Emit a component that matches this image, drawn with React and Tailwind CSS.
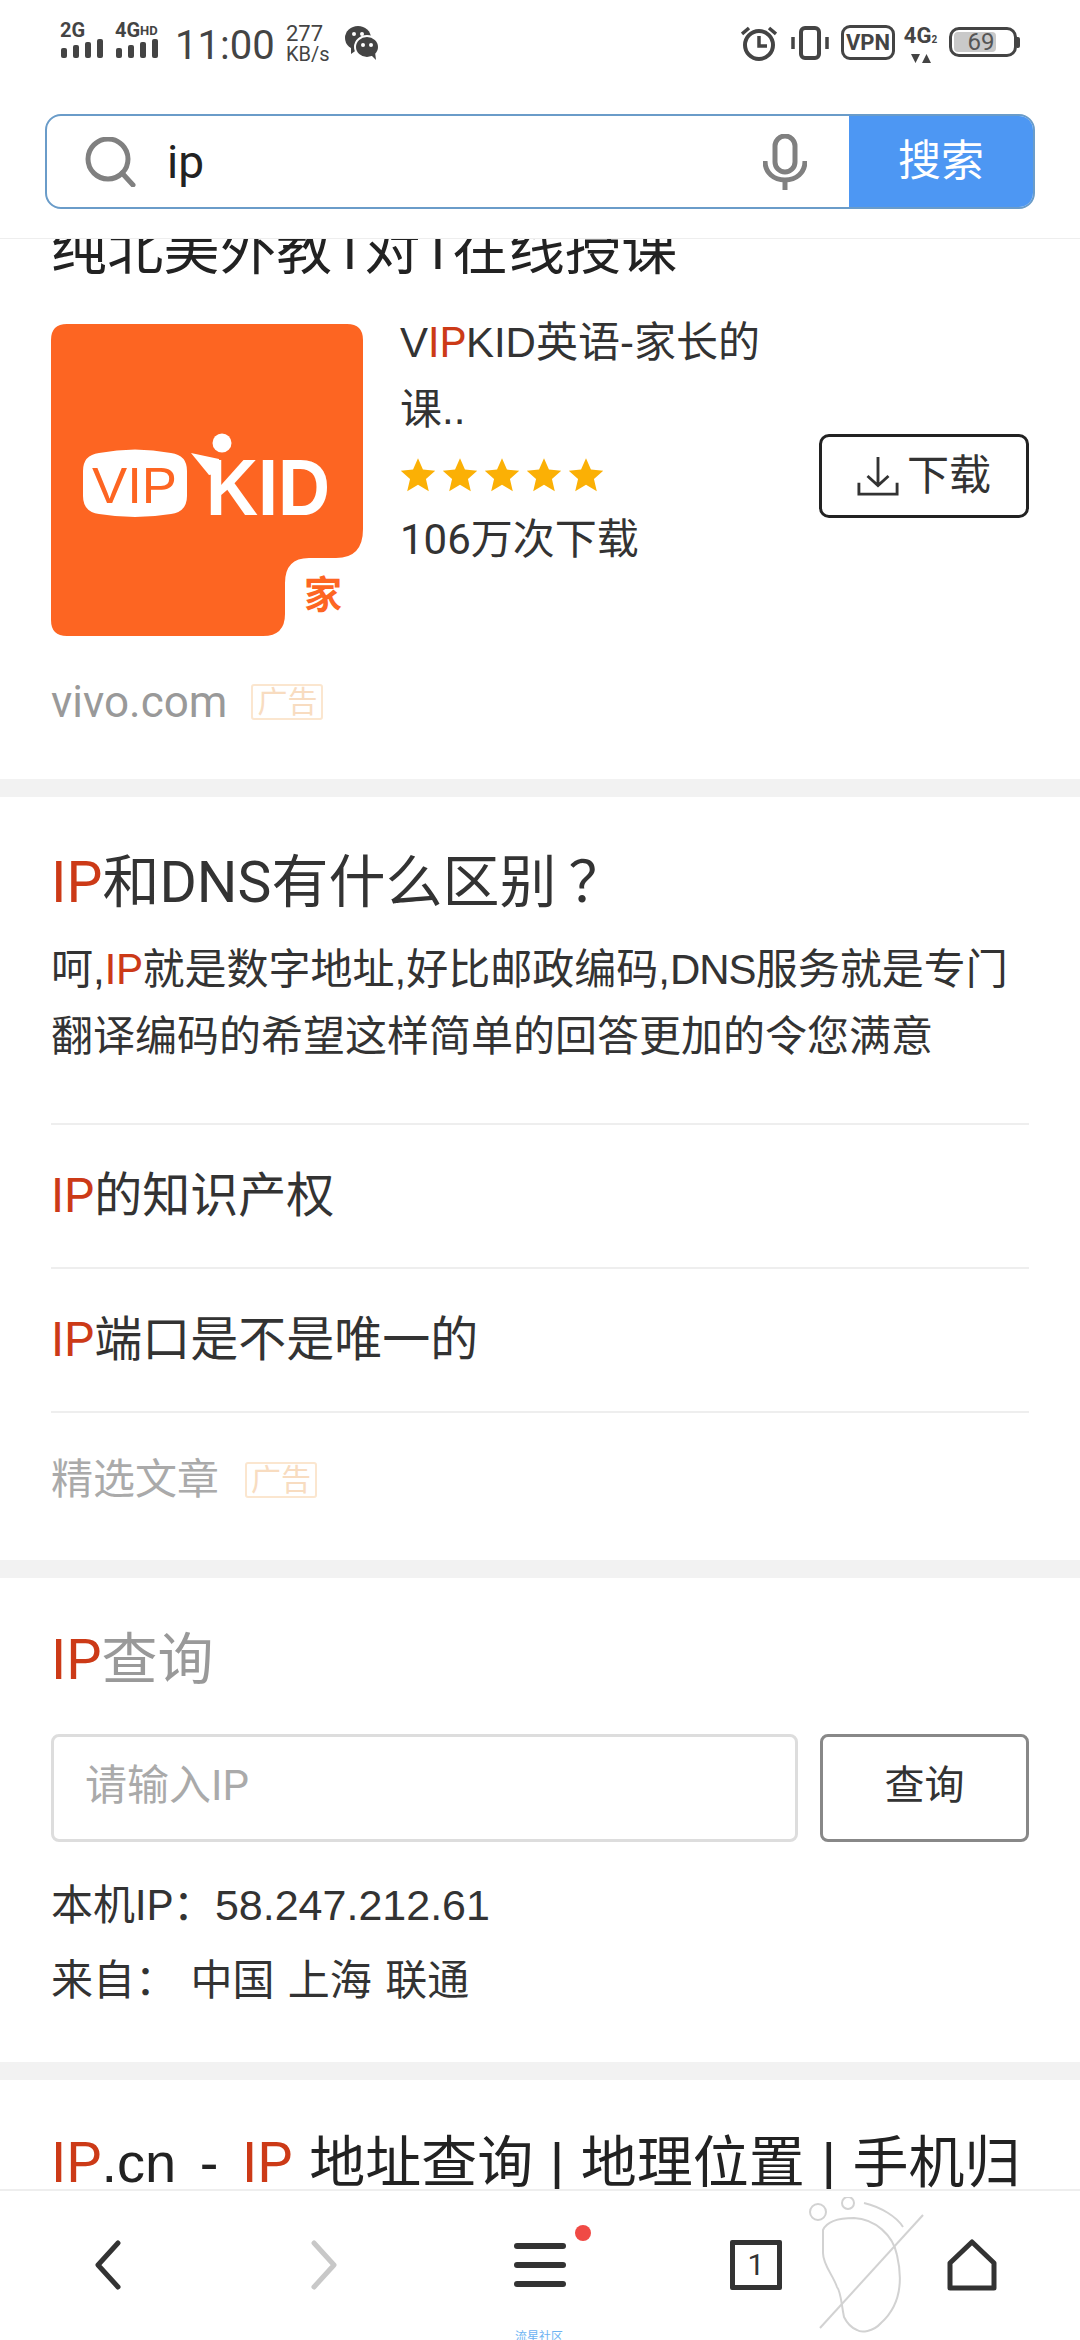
import React from 'react';

const Ip = ({ children = 'IP' }) => <span className="text-[#cc3a17] font-['Roboto',sans-serif]">{children}</span>;

const Signal = () => (
  <div className="flex items-end gap-[6px] h-[19px]">
    <div className="w-[6px] h-[10px] rounded-[2px] bg-[#444]" />
    <div className="w-[6px] h-[13px] rounded-[2px] bg-[#444]" />
    <div className="w-[6px] h-[16px] rounded-[2px] bg-[#444]" />
    <div className="w-[6px] h-[19px] rounded-[2px] bg-[#444]" />
  </div>
);

const AdTag = () => (
  <span className="flex items-center justify-center w-[72px] h-[36px] border-2 border-[#fbe6cf] rounded-[3px] text-[30px] leading-none text-[#f8dcc0]">
    广告
  </span>
);

const Band = () => <div className="h-[18px] shrink-0 bg-[#f2f2f2]" />;

const Star = () => (
  <svg width="36" height="36" viewBox="0 0 24 24" fill="#fbb005">
    <path d="M12 0.8l3.3 7.6 8.2.8-6.2 5.4 1.9 8.2L12 18.5l-7.2 4.3 1.9-8.2L.5 9.2l8.2-.8z" />
  </svg>
);

const StatusBar = () => (
  <div className="h-[114px] flex items-start justify-between pl-[60px] pr-[60px] pt-[23px] text-[#444]">
    <div className="flex items-start">
      <div className="w-[55px] flex flex-col">
        <span className="text-[20px] leading-[15px] font-bold">2G</span>
        <div className="mt-[1px] ml-[1px]"><Signal /></div>
      </div>
      <div className="w-[60px] flex flex-col">
        <span className="text-[20px] leading-[15px] font-bold whitespace-nowrap">4G<span className="text-[13px] align-top">HD</span></span>
        <div className="mt-[1px] ml-[1px]"><Signal /></div>
      </div>
      <span className="text-[40px] leading-[39px] mt-[3px] w-[111px]">11:00</span>
      <div className="w-[59px] flex flex-col leading-[20px] mt-[1px]">
        <span className="text-[22px]">277</span>
        <span className="text-[20px]">KB/s</span>
      </div>
      <svg className="mt-[2px]" width="34" height="36" viewBox="0 0 34 36">
        <ellipse cx="13" cy="13" rx="13" ry="12" fill="#444" />
        <path d="M6 21l0 8 7-5z" fill="#444" />
        <ellipse cx="22" cy="22" rx="12" ry="11" fill="#444" stroke="#fff" strokeWidth="2" />
        <path d="M26 30l5 5-1-8z" fill="#444" />
        <circle cx="9" cy="9" r="2" fill="#fff" />
        <circle cx="17" cy="9" r="2" fill="#fff" />
        <circle cx="18" cy="20" r="2" fill="#fff" />
        <circle cx="26" cy="20" r="2" fill="#fff" />
      </svg>
    </div>
    <div className="flex items-start">
      <svg className="mt-[2px]" width="36" height="36" viewBox="0 0 36 36" fill="none" stroke="#444" strokeWidth="4">
        <circle cx="18" cy="20" r="14" />
        <path d="M18 11v10h8" strokeWidth="3.5" />
        <path d="M1 9l7-6M35 9l-7-6" strokeWidth="3.5" />
      </svg>
      <svg className="ml-[13px] mt-[3px]" width="40" height="34" viewBox="0 0 40 34" fill="none" stroke="#444">
        <rect x="11" y="2" width="18" height="30" rx="4" strokeWidth="4" />
        <path d="M3 11v12M37 11v12" strokeWidth="3.5" />
      </svg>
      <div className="ml-[11px] mt-[2px] w-[54px] h-[35px] border-[3px] border-[#444] rounded-[9px] flex items-center justify-center text-[22px] leading-none font-bold">VPN</div>
      <div className="ml-[9px] mt-[3px] w-[33px] flex flex-col items-center">
        <span className="text-[22px] leading-[20px] font-bold whitespace-nowrap">4G<span className="text-[10px]">2</span></span>
        <svg className="mt-[4px]" width="20" height="9" viewBox="0 0 20 9" fill="#444">
          <path d="M0 0h9l-4.500 9zM11 9h9l-4.500-9z" />
        </svg>
      </div>
      <div className="ml-[12px] mt-[4px] flex items-center">
        <div className="relative w-[68px] h-[30px] border-[3px] border-[#444] rounded-[10px] p-[2px]">
          <div className="h-full w-[42px] rounded-[4px] bg-[#c9c9c9]" />
          <span className="absolute inset-0 flex items-center justify-center text-[24px] leading-none text-[#555] pr-[4px]">69</span>
        </div>
        <div className="w-[3px] h-[11px] bg-[#444] rounded-r-[2px]" />
      </div>
    </div>
  </div>
);

const SearchBar = () => (
  <div className="h-[125px] shrink-0 border-b border-[#eeeeee] px-[45px]">
    <div className="h-[95px] flex border-2 border-[#6a9cc9] rounded-[16px] overflow-hidden">
      <div className="flex-1 flex items-center pl-[37px]">
        <svg width="52" height="50" viewBox="0 0 52 50" fill="none" stroke="#808080" strokeWidth="5">
          <circle cx="24" cy="22" r="20" />
          <path d="M38 36l11 12" strokeLinecap="round" />
        </svg>
        <span className="ml-[31px] text-[46px] leading-none text-[#222]">ip</span>
        <svg className="ml-auto mr-[42px]" width="44" height="56" viewBox="0 0 44 56" fill="none" stroke="#808080" strokeWidth="5">
          <rect x="12" y="2" width="20" height="36" rx="10" />
          <path d="M2 27c0 12 9 19 20 19s20-7 20-19M22 46v10" />
        </svg>
      </div>
      <div className="w-[184px] bg-[#4d97f3] flex items-center justify-center text-[43px] leading-none text-white">搜索</div>
    </div>
  </div>
);

const AppIcon = () => (
  <svg width="312" height="312" viewBox="0 0 312 312" className="shrink-0">
    <path
      d="M16 0H296Q312 0 312 16V205Q312 234 285 234H258Q234 234 234 259V290Q234 312 212 312H16Q0 312 0 296V16Q0 0 16 0Z"
      fill="#fd6522"
    />
    <path d="M48 129Q84 122 120 129Q136 131 136 147V172Q136 188 120 190Q84 196 48 190Q32 188 32 172V147Q32 131 48 129Z" fill="#fff" />
    <text x="41" y="179" textLength="85" lengthAdjust="spacingAndGlyphs" fontSize="50" fill="#fd6522" fontFamily="Liberation Sans">VIP</text>
    <text x="155" y="191" textLength="124" lengthAdjust="spacingAndGlyphs" fontSize="80" fontWeight="700" fill="#fff" fontFamily="Liberation Sans">KID</text>
    <circle cx="171" cy="119" r="9.5" fill="#fff" />
    <path d="M140 129l28 6 2 14-12 2z" fill="#fff" />
    <text x="253" y="284" fontSize="38" fontWeight="700" fill="#fd6522" fontFamily="Noto Sans CJK SC">家</text>
  </svg>
);

const DownloadCard = () => (
  <div className="px-[51px] pb-[47px]">
    <div className="-mt-[24px] h-[70px] text-[56px] leading-[70px] tracking-[0.3px] text-[#222] whitespace-nowrap">纯北美外教1对1在线授课</div>
    <div className="mt-[39px] flex items-start">
      <AppIcon />
      <div className="ml-[37px] -mt-[15px] w-[370px] text-[#333]">
        <div className="text-[42px] leading-[67px] font-['Liberation_Sans','Noto_Sans_CJK_SC',sans-serif]">
          V<Ip />KID英语-家长的
          <br />
          课..
        </div>
        <div className="mt-[12px] h-[40px] flex items-center gap-[6px]">
          <Star />
          <Star />
          <Star />
          <Star />
          <Star />
        </div>
        <div className="mt-[11px] text-[42px] leading-[67px]">106万次下载</div>
      </div>
      <button className="ml-auto mt-[110px] w-[210px] h-[84px] shrink-0 border-[3px] border-[#222] rounded-[10px] flex items-center justify-center gap-[8px] text-[42px] leading-none text-[#333]">
        <svg width="42" height="42" viewBox="0 0 44 42" fill="none" stroke="#333" strokeWidth="3">
          <path d="M22 1v30M11 21l11 10 11-10M2 28v12h40V28" />
        </svg>
        下载
      </button>
    </div>
    <div className="mt-[36px] h-[60px] flex items-center gap-[24px]">
      <span className="text-[44px] leading-none text-[#999]">vivo.com</span>
      <AdTag />
    </div>
  </div>
);

const ArticleRow = ({ children }) => (
  <div className="h-[144px] border-b-2 border-[#eeeeee] flex items-center text-[48px] leading-none text-[#333]">{children}</div>
);

const ArticleCard = () => (
  <div className="px-[51px] pt-[51px]">
    <div className="text-[57px] leading-[70px] text-[#333]">
      <Ip />和DNS有什么区别<span className="ml-[12px]">？</span>
    </div>
    <div className="mt-[18px] text-[42px] leading-[67px] text-[#333] whitespace-nowrap font-['Liberation_Sans','Noto_Sans_CJK_SC',sans-serif]">
      呵,<Ip />就是数字地址,好比邮政编码,<span className="tracking-[-1px]">DNS</span>服务就是专门
      <br />
      翻译编码的希望这样简单的回答更加的令您满意
    </div>
    <div className="mt-[53px] border-t-2 border-[#eeeeee]">
      <ArticleRow><Ip />的知识产权</ArticleRow>
      <ArticleRow><Ip />端口是不是唯一的</ArticleRow>
    </div>
    <div className="h-[147px] pb-[13px] flex items-center gap-[26px]">
      <span className="text-[42px] leading-none text-[#aaa]">精选文章</span>
      <AdTag />
    </div>
  </div>
);

const IpLookup = () => (
  <div className="px-[51px] pt-[47px] pb-[44px]">
    <div className="text-[56px] leading-[70px] text-[#999]">
      <Ip />查询
    </div>
    <div className="mt-[39px] flex gap-[22px]">
      <div className="flex-1 h-[108px] border-[3px] border-[#dddddd] rounded-[8px] flex items-center pl-[31px] pb-[4px] text-[42px] leading-none text-[#aaa]">
        请输入IP
      </div>
      <button className="w-[209px] h-[108px] border-[3px] border-[#888] rounded-[8px] flex items-center justify-center pb-[4px] text-[40px] leading-none text-[#333]">
        查询
      </button>
    </div>
    <div className="mt-[26px] text-[42px] leading-[75px] text-[#333]">
      <div>本机IP：<span className="text-[43px] font-['Liberation_Sans',sans-serif]">58.247.212.61</span></div>
      <div>来自： <span className="ml-[3px] [word-spacing:3px]">中国 上海 联通</span></div>
    </div>
  </div>
);

const BottomNav = () => (
  <div className="relative h-[151px] shrink-0 border-t-2 border-[#eeeeee] bg-white grid grid-cols-5 items-center pb-[2px]">
    <div className="flex justify-center">
      <svg width="30" height="50" viewBox="0 0 30 50" fill="none" stroke="#333" strokeWidth="5" strokeLinecap="round" strokeLinejoin="round">
        <path d="M25 3L5 25l20 22" />
      </svg>
    </div>
    <div className="flex justify-center">
      <svg width="30" height="50" viewBox="0 0 30 50" fill="none" stroke="#c8c8c8" strokeWidth="5" strokeLinecap="round" strokeLinejoin="round">
        <path d="M5 3l20 22L5 47" />
      </svg>
    </div>
    <div className="flex justify-center">
      <div className="w-[52px] flex flex-col gap-[13px]">
        <div className="h-[6px] rounded-full bg-[#333]" />
        <div className="h-[6px] rounded-full bg-[#333]" />
        <div className="h-[6px] rounded-full bg-[#333]" />
      </div>
    </div>
    <div className="flex justify-center">
      <div className="w-[52px] h-[50px] border-[5px] border-[#333] rounded-[2px] flex items-center justify-center text-[30px] leading-none text-[#333]">1</div>
    </div>
    <div className="flex justify-center">
      <svg width="50" height="52" viewBox="0 0 50 52" fill="none" stroke="#333" strokeWidth="5" strokeLinejoin="round">
        <path d="M25 3L47 24V49H3V24z" />
      </svg>
    </div>
    <div className="absolute left-[575px] top-[34px] w-[16px] h-[16px] rounded-full bg-[#f04a45]" />
    {/* watermark sits over the nav */}
    <svg className="absolute left-[809px] top-[6px]" width="116" height="140" viewBox="0 0 116 140" fill="none" stroke="#d2d2d2" strokeWidth="2">
      <circle cx="9" cy="15" r="8" />
      <circle cx="39" cy="6" r="6" />
      <path d="M55 6C72 10 88 20 94 30" />
      <path d="M14 33C18 24 32 21 45 21C66 22 84 38 88 58C94 84 92 108 72 126C64 135 52 136 48 133C40 130 36 122 35 120C32 105 32 95 28 90C24 78 14 68 14 56Z" />
      <path d="M114 18L11 131" />
    </svg>
    <span className="absolute left-[515px] top-[140px] text-[12px] leading-none whitespace-nowrap text-[#6db3f2]">流星社区</span>
  </div>
);

export default function App() {
  return (
    <div className="w-[1080px] h-[2340px] flex flex-col bg-white overflow-hidden font-['Roboto','Noto_Sans_CJK_SC',sans-serif]">
      <StatusBar />
      <SearchBar />
      <div className="flex-1 min-h-0 overflow-hidden">
        <DownloadCard />
        <Band />
        <ArticleCard />
        <Band />
        <IpLookup />
        <Band />
        <div className="px-[51px] pt-[48px] text-[56px] leading-[70px] text-[#222] whitespace-nowrap [word-spacing:1px] font-['Liberation_Sans','Noto_Sans_CJK_SC',sans-serif]">
          <Ip />.cn <span className="mx-[7px]">-</span> <Ip /> 地址查询 | 地理位置 | 手机归
        </div>
      </div>
      <BottomNav />
    </div>
  );
}
